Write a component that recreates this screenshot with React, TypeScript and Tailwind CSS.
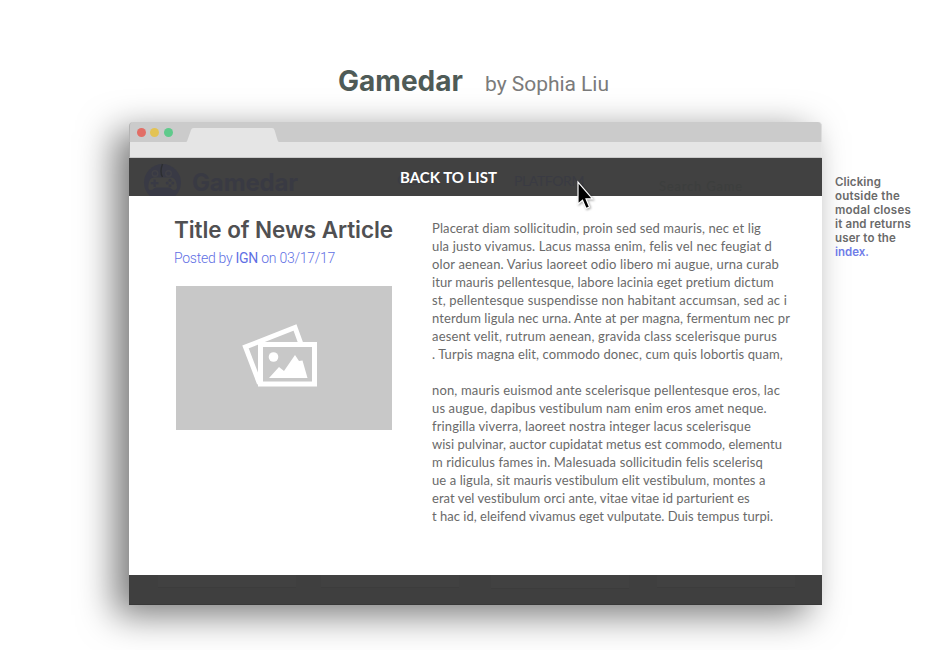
import { useLayoutEffect, useRef } from "react";
import type { ReactNode } from "react";

/* A single line of text whose tracking is adjusted to fill a given width. */
function Line({ width, className = "", children }: { width: number; className?: string; children: ReactNode }) {
  const ref = useRef<HTMLSpanElement>(null);
  useLayoutEffect(() => {
    const el = ref.current;
    if (!el) return;
    el.style.letterSpacing = "0px";
    const natural = el.getBoundingClientRect().width;
    const count = (el.textContent || "").length;
    el.style.letterSpacing = `${(width - natural) / count}px`;
  }, [width]);
  return (
    <span className={`block w-max whitespace-pre ${className}`}>
      <span ref={ref}>{children}</span>
    </span>
  );
}

const first: [string, number][] = [
  ["Placerat diam sollicitudin, proin sed sed mauris, nec et lig", 329],
  ["ula justo vivamus. Lacus massa enim, felis vel nec feugiat d", 340],
  ["olor aenean. Varius laoreet odio libero mi augue, urna curab", 347],
  ["itur mauris pellentesque, labore lacinia eget pretium dictum", 342],
  ["st, pellentesque suspendisse non habitant accumsan, sed ac i", 355],
  ["nterdum ligula nec urna. Ante at per magna, fermentum nec pr", 358],
  ["aesent velit, rutrum aenean, gravida class scelerisque purus", 345],
  [". Turpis magna elit, commodo donec, cum quis lobortis quam,", 351],
];
const second: [string, number][] = [
  ["non, mauris euismod ante scelerisque pellentesque eros, lac", 348],
  ["us augue, dapibus vestibulum nam enim eros amet neque.", 335],
  ["fringilla viverra, laoreet nostra integer lacus scelerisque", 319],
  ["wisi pulvinar, auctor cupidatat metus est commodo, elementu", 350],
  ["m ridiculus fames in. Malesuada sollicitudin felis scelerisq", 331],
  ["ue a ligula, sit mauris vestibulum elit vestibulum, montes a", 334],
  ["erat vel vestibulum orci ante, vitae vitae id parturient es", 318],
  ["t hac id, eleifend vivamus eget vulputate. Duis tempus turpi.", 341],
];
const note: [string, number][] = [
  ["Clicking", 46],
  ["outside the", 65],
  ["modal closes", 76],
  ["it and returns", 76],
  ["user to the", 61],
];

function Logo() {
  return (
    <svg className="mt-[5px] h-[38px] w-[38px] shrink-0" viewBox="0 0 38 38">
      <circle cx="19.500" cy="19.500" r="18.500" fill="#393a45" />
      <g fill="none" stroke="#414146" strokeWidth="1.400">
        <circle cx="12" cy="10.500" r="2.800" />
        <circle cx="25.500" cy="10.500" r="2.800" />
      </g>
      <path d="M19.500 1C18 5 17 10 19.500 14" fill="none" stroke="#2c2e30" strokeWidth="1.300" />
      <path d="M11 14.500h17c4 0 5.500 4 6 9 .3 4-3 4.500-6 2l-2-1H13l-2 1c-3 2.500-6 2-5.700-2C5.700 18.500 7 14.500 11 14.500z" fill="#424242" />
      <path d="M10.500 16.500h2.200V19H15.500v2.200h-2.800V24H10.500v-2.800H7.800V19h2.700z" fill="#393a45" />
      <g fill="#393a45">
        <circle cx="27" cy="17.200" r="1.500" />
        <circle cx="27" cy="22.800" r="1.500" />
        <circle cx="24.200" cy="20" r="1.500" />
        <circle cx="29.800" cy="20" r="1.500" />
      </g>
    </svg>
  );
}

export default function App() {
  return (
    <div className="relative h-[650px] w-[950px] overflow-hidden bg-white font-['Lato',sans-serif]">
      <header className="flex h-[122px] items-baseline pt-[63px] pl-[338px]">
        <h1 className="w-[147px] font-['Inter',sans-serif] text-[28px] leading-9 font-bold text-[#4f5b57]">
          <Line width={125}>Gamedar</Line>
        </h1>
        <p className="font-['Roboto',sans-serif] text-[21px] leading-9 font-normal text-[#7b7b7b]">
          <Line width={124}>by Sophia Liu</Line>
        </p>
      </header>

      <div className="flex">
        <section className="ml-[129px] w-[693px] rounded-t-[4px] shadow-[-14px_10px_36px_rgba(0,0,0,0.53)]">
          <div className="flex h-5 items-end rounded-t-[4px] border-r border-l border-r-[#dddddd] border-l-[#b4b4b4] bg-[#cbcbcb]">
            <div className="flex gap-[4.4px] pb-[5px] pl-[6.8px]">
              <i className="h-[9px] w-[9px] rounded-full bg-[#e26e66]" />
              <i className="h-[9px] w-[9px] rounded-full bg-[#e3c354]" />
              <i className="h-[9px] w-[9px] rounded-full bg-[#5fca8b]" />
            </div>
            <svg className="ml-[13px] h-[14px] w-[93px]" viewBox="0 0 93 14">
              <path d="M0 14Q1 14 1.500 12L5 2Q5.600 0 7.500 0H86Q88 0 88.500 2L91.500 12Q92 14 93 14Z" fill="#e5e5e5" />
            </svg>
          </div>
          <div className="h-4 border-r border-b border-l border-r-[#e8e8e8] border-b-[#c9c9c9] border-l-[#a8a8a8] bg-[#e5e5e5]" />

          <div className="relative flex h-[38px] overflow-hidden bg-[#414141] pl-[14px]">
            <Logo />
            <div className="ml-[11px] pt-[9px] font-['Inter',sans-serif] text-[24px] leading-8 font-bold text-[#393a43]">
              <Line width={106}>Gamedar</Line>
            </div>
            <div className="ml-[99px] pt-[12px] text-[14px] leading-5 text-[#3b3c43]">
              <Line width={43}>GENRE</Line>
            </div>
            <div className="ml-[74px] pt-[13px] text-[14px] leading-5 text-[#3a3b43]">
              <Line width={70}>PLATFORM</Line>
            </div>
            <div className="ml-[75px] pt-[18px] text-[13px] leading-5 text-[#3c3e3d]">
              <Line width={84}>Search Game</Line>
            </div>
            <div className="absolute top-[9px] left-[271px] text-[15px] leading-5 font-bold text-white">
              <Line width={97}>BACK TO LIST</Line>
            </div>
          </div>

          <main className="flex h-[379px] bg-white">
            <div className="w-[303px] pt-[18px] pl-[45px]">
              <h2 className="font-['Inter',sans-serif] text-[22.5px] leading-8 font-semibold text-[#505052]">
                <Line width={219}>Title of News Article</Line>
              </h2>
              <p className="mt-[2px] font-['Roboto',sans-serif] text-[14px] leading-5 font-light text-[#5f70e4]">
                <Line width={161}>
                  Posted by <b>IGN</b> on 03/17/17
                </Line>
              </p>
              <div className="mt-[18px] ml-[2px] h-[144px] w-[216px] bg-[#c8c8c8]">
                <svg className="h-full w-full" viewBox="176 286 216 144">
                  <path d="M259.500 383.500L245.500 347L295 327.500L301 344" fill="none" stroke="#fff" strokeWidth="5" />
                  <rect x="260.500" y="344.500" width="54" height="39.500" fill="#c8c8c8" stroke="#fff" strokeWidth="5" />
                  <circle cx="273.500" cy="357" r="4.800" fill="#fff" />
                  <path d="M269 378L279 367L284 371L295 355L299 361L302.500 360.500L307.500 378Z" fill="#fff" />
                </svg>
              </div>
            </div>
            <div className="flex flex-col gap-[18px] pt-[23px] text-[13px] leading-[18px] text-[#6a6a6a]">
              <div>
                {first.map(([t, w]) => (
                  <Line key={t} width={w}>{t}</Line>
                ))}
              </div>
              <div>
                {second.map(([t, w]) => (
                  <Line key={t} width={w}>{t}</Line>
                ))}
              </div>
            </div>
          </main>

          <div className="flex h-[30px] items-start border-b border-[#383838] bg-[#3f3f3f] pl-[29px]">
            <div className="h-[13px] w-[138px] border-b border-[#3c3c3c] bg-[#414141]" />
            <div className="ml-[25px] h-[13px] w-[138px] border-b border-[#3c3c3c] bg-[#414141]" />
            <div className="ml-[32px] h-[14px] w-[138px] border-b border-[#3c3c3c] bg-[#414141]" />
            <div className="ml-[28px] h-[13px] w-[138px] border-b border-[#3c3c3c] bg-[#414141]" />
          </div>
        </section>

        <aside className="ml-[13px] pt-[53px] font-['Inter',sans-serif] text-[11.5px] leading-[14px] font-semibold text-[#6a6a6a]">
          {note.map(([t, w]) => (
            <Line key={t} width={w}>{t}</Line>
          ))}
          <Line width={34} className="text-[#6f7ce8]">index.</Line>
        </aside>
      </div>

      <svg className="absolute top-[179px] left-[574px] h-[34px] w-[24px] drop-shadow-[1px_1px_1px_rgba(0,0,0,0.35)]" viewBox="0 0 24 34">
        <path d="M4 3V25L8.500 21.200L12 29.500L15.500 28L12 19.800H18.500Z" fill="#000" stroke="#fff" strokeWidth="1.200" />
      </svg>
    </div>
  );
}
